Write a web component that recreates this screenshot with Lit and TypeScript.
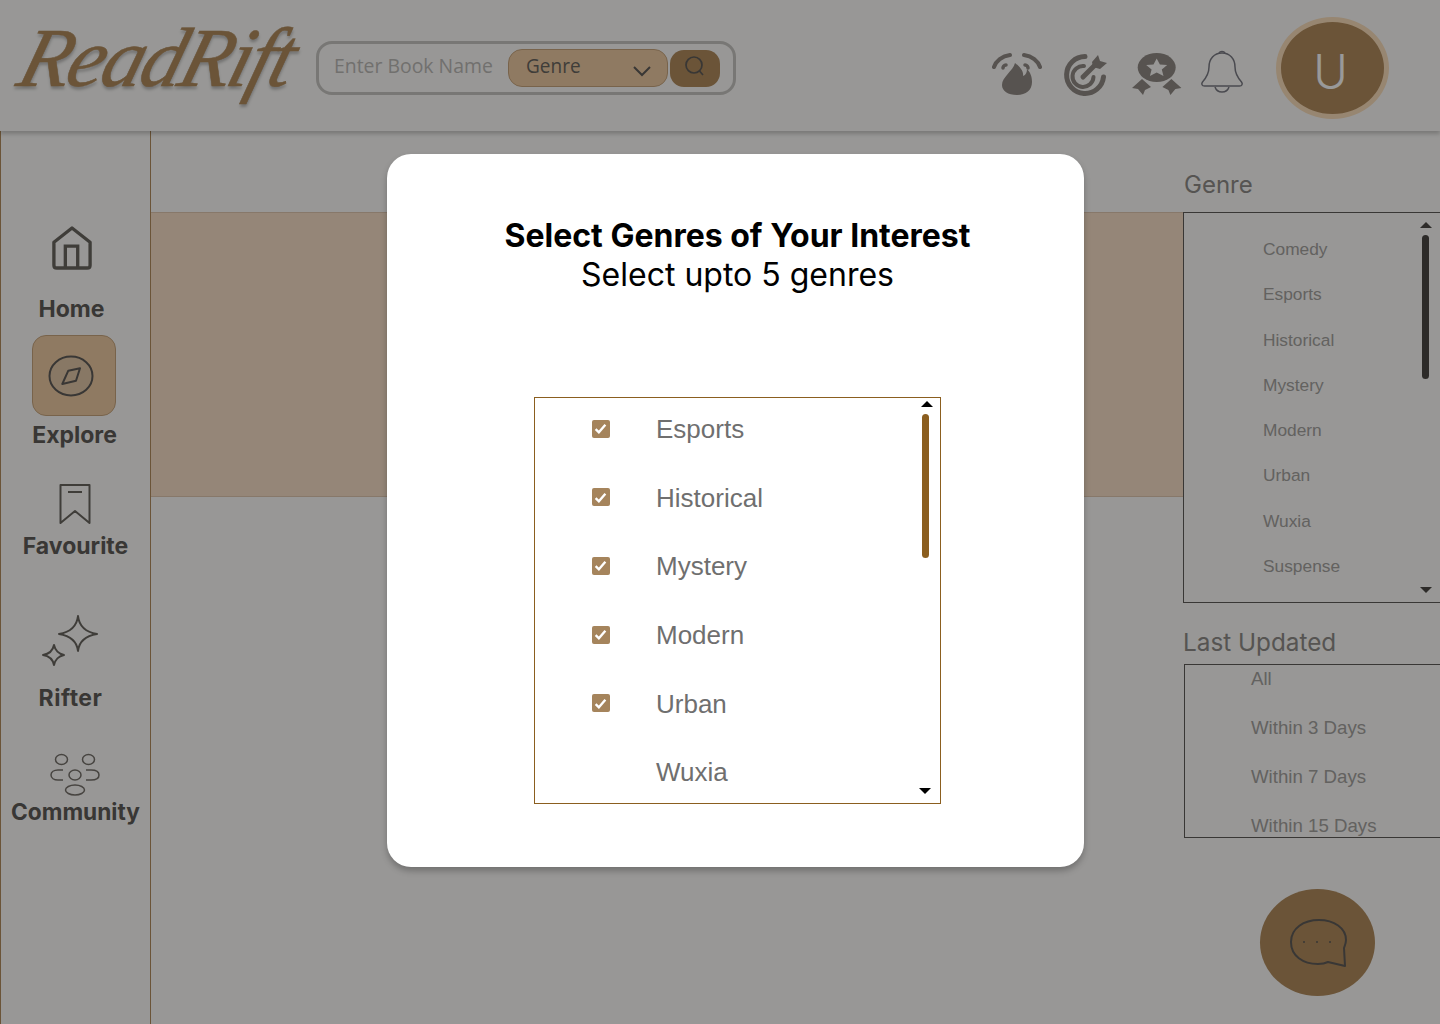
import { LitElement, html, css, svg } from "lit";
import { customElement } from "lit/decorators.js";

const GENRES = ["Comedy","Esports","Historical","Mystery","Modern","Urban","Wuxia","Suspense"];
const UPDATED = ["All","Within 3 Days","Within 7 Days","Within 15 Days"];
const MODAL = [["Esports",true],["Historical",true],["Mystery",true],["Modern",true],["Urban",true],["Wuxia",false]] as [string,boolean][];

const flame = svg`<svg width="50" height="44" viewBox="0 0 50 44"><path d="M23 11c-2 8-13 14-13 22 0 6 6 10 15 10s15-5 15-13c0-6-2-10-5-13 0 3-1 6-4 7 1-5-4-10-8-13z" fill="#918a85"/><path d="M2 15C4 9 10 4 18 3M48 15C46 9 40 4 32 3" fill="none" stroke="#918a85" stroke-width="4" stroke-linecap="round"/><path d="M11 16c0-1 1-3 3-3M36 16c0-1-1-3-3-3" fill="none" stroke="#918a85" stroke-width="3.500" stroke-linecap="round"/></svg>`;
const target = svg`<svg width="48" height="44" viewBox="0 0 48 44"><path d="M25 3.500A18.500 18.500 0 1 0 43.500 24" fill="none" stroke="#918a85" stroke-width="5" stroke-linecap="round"/><path d="M24 13A10.500 10.500 0 1 0 33.500 24" fill="none" stroke="#918a85" stroke-width="4" stroke-linecap="round"/><path d="M23 24 36 11" stroke="#918a85" stroke-width="5" stroke-linecap="round"/><path d="M32 9l6-7 2 6 7 2-7 6-7-2z" fill="#918a85"/></svg>`;
const award = svg`<svg width="54" height="46" viewBox="0 0 54 46"><path d="M1 36l10-9 9 8-6 3-2 5-5-6zM50.400 36l-10-9-9 8 6 3 2 5 5-6z" fill="#918a85"/><ellipse cx="25.700" cy="15.500" rx="20" ry="15.500" fill="#fdfcfa"/><ellipse cx="25.700" cy="15.500" rx="19" ry="14.500" fill="#918a85"/><path d="M25.700 6.500l3.200 6 7.300.6-5.400 4.400 1.700 6.500-6.800-3.400-6.800 3.400 1.700-6.500-5.400-4.400 7.300-.6z" fill="#fdfcfa"/></svg>`;
const bell = svg`<svg width="44" height="44" viewBox="0 0 44 44"><path d="M22 3c-8 0-13 6-13 14 0 7-3 11-6.500 15-1.500 2-.5 4 2 4h35c2.500 0 3.500-2 2-4-3.500-4-6.500-8-6.500-15 0-8-5-14-13-14z" fill="none" stroke="#7c7c85" stroke-width="1.500"/><path d="M15 37c1 3 4 5 7 5s6-2 7-5M19 3c1-2 5-2 6 0" fill="none" stroke="#7c7c85" stroke-width="1.500"/></svg>`;
const search = svg`<svg width="24" height="24" viewBox="0 0 24 24"><circle cx="11" cy="10" r="8" fill="none" stroke="#5f5c59" stroke-width="1.700"/><path d="M16.500 16 20 20" stroke="#5f5c59" stroke-width="1.700"/></svg>`;
const chevron = svg`<svg width="20" height="12" viewBox="0 0 20 12"><path d="M2 2l8 8 8-8" fill="none" stroke="#5f5c59" stroke-width="2"/></svg>`;
const home = svg`<svg width="40" height="44" viewBox="0 0 42 46"><path d="M21 2 40 17v24c0 2-1 3-3 3H5c-2 0-3-1-3-3V17z" fill="none" stroke="#6a6660" stroke-width="3.500" stroke-linejoin="round"/><path d="M14 44V21h13v23" fill="none" stroke="#6a6660" stroke-width="3.500"/></svg>`;
const compass = svg`<svg width="46" height="42" viewBox="0 0 46 42"><ellipse cx="23" cy="21" rx="21.500" ry="19.500" fill="#e3c8a8" stroke="#5f5c59" stroke-width="2"/><path d="M14.300 29 20.300 15.700 32 13.300 28 25.700z" fill="none" stroke="#5f5c59" stroke-width="2" stroke-linejoin="round"/></svg>`;
const bookmark = svg`<svg width="32" height="42" viewBox="0 0 32 42"><path d="M1.500 40V2h29v38L16 28z" fill="none" stroke="#6a6660" stroke-width="2" stroke-linejoin="round"/><path d="M9 9h14" stroke="#6a6660" stroke-width="2"/></svg>`;
const rifter = svg`<svg width="58" height="54" viewBox="0 0 58 54"><path d="M37 1c1 9 7 16 19 18-12 2-18 8-19 17-1-9-7-15-19-17 12-2 18-9 19-18z" fill="none" stroke="#6a6660" stroke-width="2" stroke-linejoin="round"/><path d="M13 30c1 5 5 9 10 10-5 1-9 5-10 10-1-5-5-9-11-10 6-1 10-5 11-10z" fill="none" stroke="#6a6660" stroke-width="2" stroke-linejoin="round"/></svg>`;
const community = svg`<svg width="50" height="44" viewBox="0 0 50 44"><g fill="none" stroke="#77726c" stroke-width="1.500"><ellipse cx="11.500" cy="6.500" rx="6" ry="5"/><ellipse cx="38.500" cy="6.500" rx="6" ry="5"/><ellipse cx="25" cy="22" rx="6" ry="5"/><ellipse cx="25" cy="37" rx="9.500" ry="5"/><path d="M13 17H8c-4 0-7 2-7 5s3 5 7 5h5M36 17h5c5 0 8 2 8 5s-3 5-8 5h-5"/></g></svg>`;
const chat = svg`<svg width="58" height="50" viewBox="0 0 58 50"><path d="M55 30C56 27 57 25 57 22 57 10 45 2 30 2S2 10 2 24s12 22 27 22c5 0 8-1 10-2l17 4z" fill="none" stroke="#5f5c59" stroke-width="2" stroke-linejoin="round"/><circle cx="15" cy="24" r="1" fill="#5f5c59"/><circle cx="28" cy="24" r="1" fill="#5f5c59"/><circle cx="41" cy="24" r="1" fill="#5f5c59"/></svg>`;

@customElement("app-root")
export class AppRoot extends LitElement {
  static styles = css`
    :host { display: block; position: relative; width: 1440px; height: 1024px; overflow: hidden; background: #fdfcfa; font-family: Inter, "Liberation Sans", sans-serif; }
    .header { height: 131px; display: flex; align-items: flex-start; box-shadow: 0 3px 4px rgba(0,0,0,.2); position: relative; }
    .logo { margin: 8px 0 0 12px; width: 304px; height: 100px; font: italic 400 84px/100px "Liberation Serif", serif; color: #b28c5e; letter-spacing: -3px; white-space: nowrap; text-shadow: 1px 3px 3px rgba(0,0,0,.25); transform: skewX(-16deg) translateX(-4px); transform-origin: 50% 100%; -webkit-text-stroke: .5px #b28c5e; }
    .search { box-sizing: border-box; margin-top: 41px; width: 420px; height: 54px; border: 3px solid #c9c7c3; border-radius: 16px; display: flex; align-items: center; padding: 0 0 0 15px; }
    .placeholder { width: 174px; padding-bottom: 6px; font: 400 20px "Open Sans", sans-serif; color: #bdbbb8; white-space: nowrap; transform: scaleX(.97); transform-origin: 0 50%; }
    .select { box-sizing: border-box; width: 160px; height: 38px; border-radius: 14px; background: #efcca4; border: 1px solid #c9a67e; display: flex; align-items: center; justify-content: space-between; padding: 0 15px 0 17px; font: 400 20px "Open Sans", sans-serif; color: #6a6660; }
    .select span { padding-bottom: 6px; transform: scaleX(.95); transform-origin: 0 50%; }
    .select svg { margin-top: 5px; }
    .go { width: 50px; height: 37px; margin-left: 2px; border-radius: 14px; background: #b28c5e; display: flex; align-items: center; justify-content: center; }
    .go svg { margin-top: -3px; }
    .tools { display: flex; margin: 50px 0 0 256px; align-items: flex-start; }
    .tools svg { display: block; }
    .t1 { margin-top: 2px; }
    .t2 { margin: 3px 0 0 18px; }
    .t3 { margin: 2px 0 0 23px; }
    .t4 { margin: 0 0 0 15px; }
    .avatar { box-sizing: border-box; width: 113px; height: 102px; margin: 17px 0 0 32px; padding: 4px 4px 0 0; border-radius: 50%; background: #b28c5e; border: 5px solid #fcdfbc; color: #fff; display: flex; align-items: center; justify-content: center; font-size: 47px; font-weight: 300; }
    .body { display: flex; height: 893px; }
    .side { box-sizing: border-box; width: 151px; border: 1px solid #b28c5e; border-width: 0 1px 0 1px; display: flex; flex-direction: column; align-items: flex-start; font-size: 23px; font-weight: 700; color: #5f5c59; }
    .side svg { display: block; }
    .nav { display: flex; flex-direction: column; align-items: center; width: 149px; }
    .label { line-height: 28px; white-space: nowrap; }
    .home { margin-top: 95px; transform: translateX(-4px); gap: 25px; }
    .explore { margin-top: 12px; gap: 5px; }
    .explore .label { transform: translateX(-1px); }
    .tile { width: 84px; height: 81px; border-radius: 14px; background: #efcca4; border: 1px solid #c9a67e; box-sizing: border-box; display: flex; align-items: center; justify-content: flex-start; padding-left: 15px; transform: translateX(-2px); }
    .fav { margin-top: 34px; gap: 7px; }
    .fav svg { transform: translateX(-1px); }
    .rifter { margin-top: 55px; gap: 15px; transform: translateX(-5px); }
    .rifter svg { transform: translateX(-1px); }
    .rifter .label { letter-spacing: .5px; }
    .comm { margin-top: 41px; gap: 1px; }
    .comm svg { transform: translateX(-1px); }
    .comm .label { font-size: 22.700px; }
    .center { flex: 0 0 1032px; padding-top: 81px; box-sizing: border-box; }
    .band { height: 285px; background: #f9dfc8; border: 1px solid #e2c9b1; border-width: 1px 0; box-sizing: border-box; }
    .right { flex: 1; min-width: 0; color: #8c8a87; }
    .h { font-size: 24px; line-height: 30px; color: #8f8c89; white-space: nowrap; }
    .h1 { margin: 39px 0 12px 1px; }
    .h2 { margin: 24px 0 7px 0; font-size: 24.300px; }
    .box { position: relative; box-sizing: border-box; overflow: hidden; font-family: "Liberation Sans", Arial, sans-serif; }
    .gbox { width: 280px; height: 391px; border: 1px solid #5f5c59; padding: 14px 0 0 79px; font-size: 17.330px; line-height: 45.300px; color: #a5a3a0; }
    .gbox div { white-space: nowrap; }
    .ubox { margin-left: 1px; width: 280px; height: 174px; border: 1px solid #5f5c59; padding: 0 0 0 66px; font-size: 18.670px; color: #a5a3a0; }
    .ubox div { line-height: 49px; white-space: nowrap; }
    .ubox div:first-child { margin-top: -11px; }
    .bar { position: absolute; width: 7px; border-radius: 4px; }
    .up, .down { position: absolute; width: 0; height: 0; border-left: 6px solid transparent; border-right: 6px solid transparent; }
    .up { border-bottom: 6px solid #000; }
    .down { border-top: 6px solid #000; }
    .gbox .bar { left: 238px; top: 22px; height: 144px; background: #4b4845; }
    .gbox .up { left: 236px; top: 9px; border-bottom-color: #4b4845; }
    .gbox .down { left: 236px; top: 374px; border-top-color: #4b4845; }
    .fab { position: absolute; left: 1260px; top: 889px; width: 115px; height: 107px; border-radius: 50%; background: #b28c5e; display: flex; align-items: center; justify-content: center; }
    .overlay { position: absolute; inset: 0; background: rgba(0,0,0,.4); box-sizing: border-box; padding: 154px 0 0 387px; }
    .modal { box-sizing: border-box; width: 697px; height: 713px; border-radius: 24px; background: #fff; box-shadow: 0 4px 6px rgba(0,0,0,.25); padding-top: 62px; display: flex; flex-direction: column; align-items: center; color: #000; }
    .title { font-size: 32px; line-height: 39px; font-weight: 700; transform: translateX(2px); white-space: nowrap; }
    .sub { font-size: 32px; line-height: 40px; font-weight: 400; transform: translateX(2px); white-space: nowrap; }
    .mbox { margin: 102px 0 0 3px; width: 407px; height: 407px; border: 1px solid #8b5e1f; font-size: 26px; color: #6f6f6f; flex: none; }
    .rows { margin-top: -2.500px; }
    .row { display: flex; height: 68.600px; align-items: center; }
    .check { box-sizing: border-box; width: 18px; height: 18px; margin-left: 57px; margin-right: 46.500px; border-radius: 2px; background: #a5845c; display: flex; align-items: center; justify-content: center; transform: translateY(-1px); }
    .check svg { display: block; }
    .none { background: transparent; }
    .mbox .bar { left: 387px; top: 16px; height: 144px; background: #8b5e1f; }
    .mbox .up { left: 386px; top: 3px; }
    .mbox .down { left: 384px; top: 390px; }
  `;

  render() {
    return html`
      <div class="header">
        <div class="logo">ReadRift</div>
        <div class="search">
          <div class="placeholder">Enter Book Name</div>
          <div class="select"><span>Genre</span>${chevron}</div>
          <div class="go">${search}</div>
        </div>
        <div class="tools">
          <div class="t1">${flame}</div><div class="t2">${target}</div><div class="t3">${award}</div><div class="t4">${bell}</div>
        </div>
        <div class="avatar">U</div>
      </div>
      <div class="body">
        <div class="side">
          <div class="nav home">${home}<div class="label">Home</div></div>
          <div class="nav explore"><div class="tile">${compass}</div><div class="label">Explore</div></div>
          <div class="nav fav">${bookmark}<div class="label">Favourite</div></div>
          <div class="nav rifter">${rifter}<div class="label">Rifter</div></div>
          <div class="nav comm">${community}<div class="label">Community</div></div>
        </div>
        <div class="center"><div class="band"></div></div>
        <div class="right">
          <div class="h h1">Genre</div>
          <div class="box gbox">
            ${GENRES.map((g) => html`<div>${g}</div>`)}
            <span class="up"></span><span class="bar"></span><span class="down"></span>
          </div>
          <div class="h h2">Last Updated</div>
          <div class="box ubox">${UPDATED.map((u) => html`<div>${u}</div>`)}</div>
        </div>
      </div>
      <div class="fab">${chat}</div>
      <div class="overlay">
        <div class="modal">
          <div class="title">Select Genres of Your Interest</div>
          <div class="sub">Select upto 5 genres</div>
          <div class="box mbox">
            <div class="rows">
            ${MODAL.map(([g, on]) => html`<div class="row">
              <span class="check ${on ? "" : "none"}">${on ? html`<svg width="13" height="11" viewBox="0 0 12 10"><path d="M1.500 5.500 4.500 8.500 10.500 1.500" fill="none" stroke="#fff" stroke-width="2.200"/></svg>` : ""}</span>${g}</div>`)}
            </div>
            <span class="up"></span><span class="bar"></span><span class="down"></span>
          </div>
        </div>
      </div>
    `;
  }
}
